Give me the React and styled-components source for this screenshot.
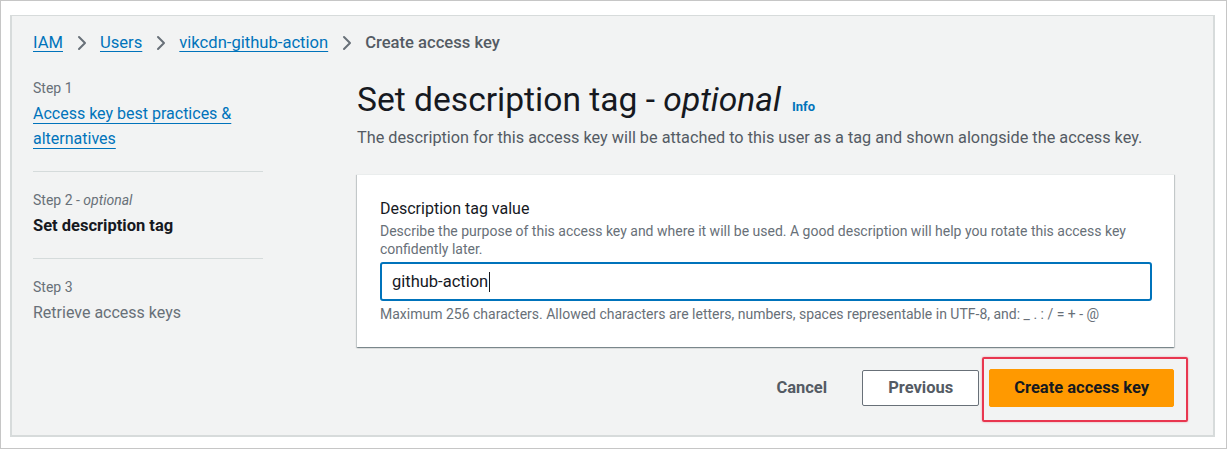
import React from 'react';
import styled, { createGlobalStyle } from 'styled-components';

const GlobalStyle = createGlobalStyle`
  html, body {
    margin: 0;
    padding: 0;
    background: #ffffff;
  }
  body {
    font-family: Roboto, "Liberation Sans", Arial, sans-serif;
    color: #16191f;
    -webkit-font-smoothing: antialiased;
  }
  * { box-sizing: border-box; }
`;

// cadre blanc autour de la capture
const Frame = styled.div`
  width: 1227px;
  height: 449px;
  border: 1px solid #c6c6c6;
  padding: 14px 11px 11px 9px;
`;

const Panel = styled.div`
  height: 100%;
  background: #f2f3f3;
  border: 2px solid #d7dbdb;
  border-top-width: 1px;
  padding: 17px 39px 0 21px;
`;

const Breadcrumbs = styled.nav`
  display: flex;
  align-items: center;
  height: 20px;
  font-size: 16.6px;
  line-height: 20px;
`;

const Crumb = styled.a`
  color: #0073bb;
  text-decoration: underline;
  text-decoration-thickness: 1px;
  text-underline-offset: 3px;
  cursor: pointer;
`;

const CurrentCrumb = styled.span`
  color: #545b64;
  font-weight: 500;
`;

const Chevron = styled.svg`
  width: 16px;
  height: 16px;
  margin: 0 10px 0 11px;
  flex: none;
`;

const Body = styled.div`
  display: grid;
  grid-template-columns: 230px 1fr;
  column-gap: 94px;
  margin-top: 17px;
`;

const Steps = styled.ol`
  list-style: none;
  margin: 0;
  padding: 9px 0 0;
`;

const StepItem = styled.li`
  padding: 19px 0 20px;
  border-top: 1px solid #d5dbdb;

  &:first-child {
    padding-top: 0;
    border-top: none;
  }
`;

const StepLabel = styled.div`
  font-size: 14px;
  line-height: 18px;
  color: #687078;
  margin-bottom: 4px;

  em {
    font-style: italic;
  }
`;

const StepLink = styled.a`
  font-size: 16px;
  line-height: 25px;
  color: #0073bb;
  text-decoration: underline;
  text-decoration-thickness: 1px;
  text-underline-offset: 4px;
  cursor: pointer;
`;

const StepTitle = styled.div`
  font-size: ${(p) => (p.$active ? '16.5px' : '16px')};
  line-height: 25px;
  color: ${(p) => (p.$active ? '#16191f' : '#687078')};
  font-weight: ${(p) => (p.$active ? 700 : 400)};
`;

const Main = styled.main`
  padding-top: 11px;
`;

const Title = styled.h1`
  margin: 0;
  height: 38px;
  font-size: 33.6px;
  line-height: 38px;
  font-weight: 400;
  color: #16191f;
  white-space: nowrap;

  em {
    font-style: italic;
  }
`;

const InfoLink = styled.a`
  font-size: 13px;
  font-weight: 700;
  color: #0073bb;
  margin-left: 11px;
  vertical-align: baseline;
`;

const Lead = styled.p`
  margin: 8px 0 0;
  font-size: 16.25px;
  line-height: 22px;
  color: #545b64;
  white-space: nowrap;
`;

const Card = styled.section`
  margin-top: 25px;
  background: #ffffff;
  border-top: 1px solid #eaeded;
  box-shadow: 0 1px 1px 0 rgba(0, 28, 36, 0.3), 1px 1px 1px 0 rgba(0, 28, 36, 0.15),
    -1px 1px 1px 0 rgba(0, 28, 36, 0.15);
  padding: 24px 22px 24px 23px;
`;

const Label = styled.label`
  display: block;
  font-size: 16px;
  line-height: 20px;
  color: #16191f;
`;

const Hint = styled.div`
  font-size: 14px;
  line-height: 18px;
  color: #687078;
  margin-top: ${(p) => p.$top || 0}px;
`;

const Field = styled.div`
  margin-top: 4px;
  height: 39px;
  border: 2px solid #0073bb;
  border-radius: 3px;
  padding: 0 10px;
  display: flex;
  align-items: center;
  font-size: 16.5px;
  color: #16191f;
`;

const Caret = styled.span`
  display: inline-block;
  width: 1px;
  height: 20px;
  background: #16191f;
  margin-left: 1px;
`;

const Actions = styled.div`
  display: flex;
  justify-content: flex-end;
  align-items: center;
  margin-top: 22px;
  gap: 10px;
`;

const Button = styled.button`
  font-family: inherit;
  font-size: 16.5px;
  font-weight: 700;
  line-height: 20px;
  border-radius: 2px;
  cursor: pointer;
  padding: ${(p) => (p.$variant === 'primary' ? '8px 24px' : p.$variant === 'normal' ? '7px 25px' : '7px 24px')};
  border: ${(p) =>
    p.$variant === 'normal' ? '1px solid #687078' : p.$variant === 'primary' ? '1px solid #ff9900' : '1px solid transparent'};
  background: ${(p) => (p.$variant === 'primary' ? '#ff9900' : p.$variant === 'normal' ? '#ffffff' : 'transparent')};
  color: ${(p) => (p.$variant === 'primary' ? '#16191f' : '#545b64')};
`;

const Highlight = styled.span`
  position: relative;
  display: inline-flex;

  &::after {
    content: '';
    position: absolute;
    top: -12px;
    left: -7px;
    right: -14px;
    bottom: -15px;
    border: 2px solid #e8364f;
    border-radius: 2px;
    box-shadow: 0 0 2px rgba(232, 54, 79, 0.5);
    pointer-events: none;
  }
`;

const Sep = () => (
  <Chevron viewBox="0 0 16 16" fill="none">
    <polyline points="5,2 11,8 5,14" stroke="#687078" strokeWidth="2" strokeLinecap="round" strokeLinejoin="round" />
  </Chevron>
);

const App = () => {
  return (
    <>
      <GlobalStyle />
      <Frame>
        <Panel>
          <Breadcrumbs>
            <Crumb>IAM</Crumb>
            <Sep />
            <Crumb>Users</Crumb>
            <Sep />
            <Crumb>vikcdn-github-action</Crumb>
            <Sep />
            <CurrentCrumb>Create access key</CurrentCrumb>
          </Breadcrumbs>

          <Body>
            <Steps>
              <StepItem>
                <StepLabel>Step 1</StepLabel>
                <StepLink>Access key best practices &amp; alternatives</StepLink>
              </StepItem>
              <StepItem>
                <StepLabel>
                  Step 2 - <em>optional</em>
                </StepLabel>
                <StepTitle $active>Set description tag</StepTitle>
              </StepItem>
              <StepItem>
                <StepLabel>Step 3</StepLabel>
                <StepTitle>Retrieve access keys</StepTitle>
              </StepItem>
            </Steps>

            <Main>
              <Title>
                Set description tag - <em>optional</em>
                <InfoLink>Info</InfoLink>
              </Title>
              <Lead>
                The description for this access key will be attached to this user as a tag and shown alongside the access key.
              </Lead>

              <Card>
                <Label>Description tag value</Label>
                <Hint $top={3}>
                  Describe the purpose of this access key and where it will be used. A good description will help you rotate this access key
                  confidently later.
                </Hint>
                <Field>
                  github-action
                  <Caret />
                </Field>
                <Hint $top={4}>
                  Maximum 256 characters. Allowed characters are letters, numbers, spaces representable in UTF-8, and: _ . : / = + - @
                </Hint>
              </Card>

              <Actions>
                <Button $variant="link">Cancel</Button>
                <Button $variant="normal">Previous</Button>
                <Highlight>
                  <Button $variant="primary">Create access key</Button>
                </Highlight>
              </Actions>
            </Main>
          </Body>
        </Panel>
      </Frame>
    </>
  );
};

export default App;
